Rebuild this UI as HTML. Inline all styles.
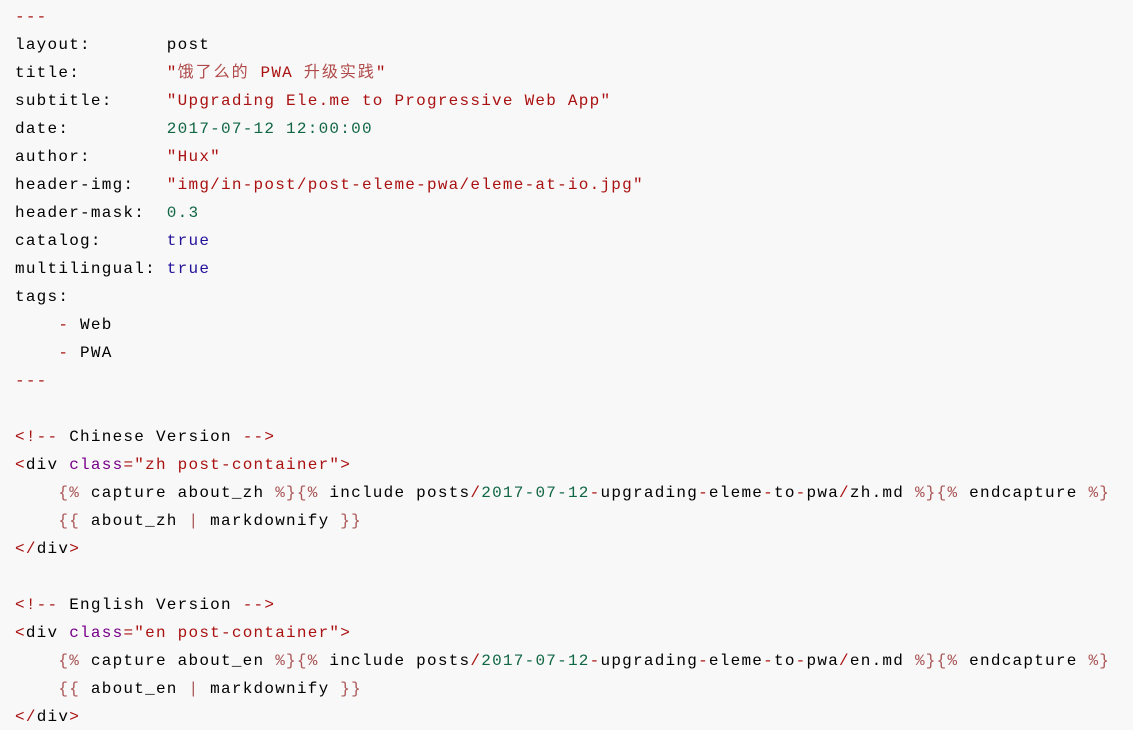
<!DOCTYPE html>
<html><head><meta charset="utf-8"><style>
html,body{margin:0;padding:0;background:#f8f8f8;width:1133px;height:730px;overflow:hidden}
pre{margin:0;padding:3px 0 0 15px;font-family:"Liberation Mono","Noto Sans CJK SC",monospace;font-size:16px;letter-spacing:1.24px;line-height:28px;color:#000}
.r{color:#a11}.g{color:#164}.b{color:#219}.p{color:#708}.m{color:#a55}
.c{font-family:"Noto Sans CJK SC",sans-serif;font-size:16px;letter-spacing:2px;color:#b04a4a;line-height:16px}
</style></head><body><pre><span class="r">---</span>
layout:       post
title:        <span class="r">"<span class="c">饿了么的</span> PWA <span class="c">升级实践</span>"</span>
subtitle:     <span class="r">"Upgrading Ele.me to Progressive Web App"</span>
date:         <span class="g">2017-07-12 12:00:00</span>
author:       <span class="r">"Hux"</span>
header-img:   <span class="r">"img/in-post/post-eleme-pwa/eleme-at-io.jpg"</span>
header-mask:  <span class="g">0.3</span>
catalog:      <span class="b">true</span>
multilingual: <span class="b">true</span>
tags:
    <span class="r">-</span> Web
    <span class="r">-</span> PWA
<span class="r">---</span>

<span class="r">&lt;!--</span> Chinese Version <span class="r">--&gt;</span>
<span class="r">&lt;</span>div <span class="p">class</span><span class="r">="zh post-container"&gt;</span>
    <span class="m">{%</span> capture about_zh <span class="m">%}{%</span> include posts<span class="r">/</span><span class="g">2017-07-12</span><span class="r">-</span>upgrading<span class="r">-</span>eleme<span class="r">-</span>to<span class="r">-</span>pwa<span class="r">/</span>zh.md <span class="m">%}{%</span> endcapture <span class="m">%}</span>
    <span class="m">{{</span> about_zh <span class="m">|</span> markdownify <span class="m">}}</span>
<span class="r">&lt;/</span>div<span class="r">&gt;</span>

<span class="r">&lt;!--</span> English Version <span class="r">--&gt;</span>
<span class="r">&lt;</span>div <span class="p">class</span><span class="r">="en post-container"&gt;</span>
    <span class="m">{%</span> capture about_en <span class="m">%}{%</span> include posts<span class="r">/</span><span class="g">2017-07-12</span><span class="r">-</span>upgrading<span class="r">-</span>eleme<span class="r">-</span>to<span class="r">-</span>pwa<span class="r">/</span>en.md <span class="m">%}{%</span> endcapture <span class="m">%}</span>
    <span class="m">{{</span> about_en <span class="m">|</span> markdownify <span class="m">}}</span>
<span class="r">&lt;/</span>div<span class="r">&gt;</span></pre></body></html>
